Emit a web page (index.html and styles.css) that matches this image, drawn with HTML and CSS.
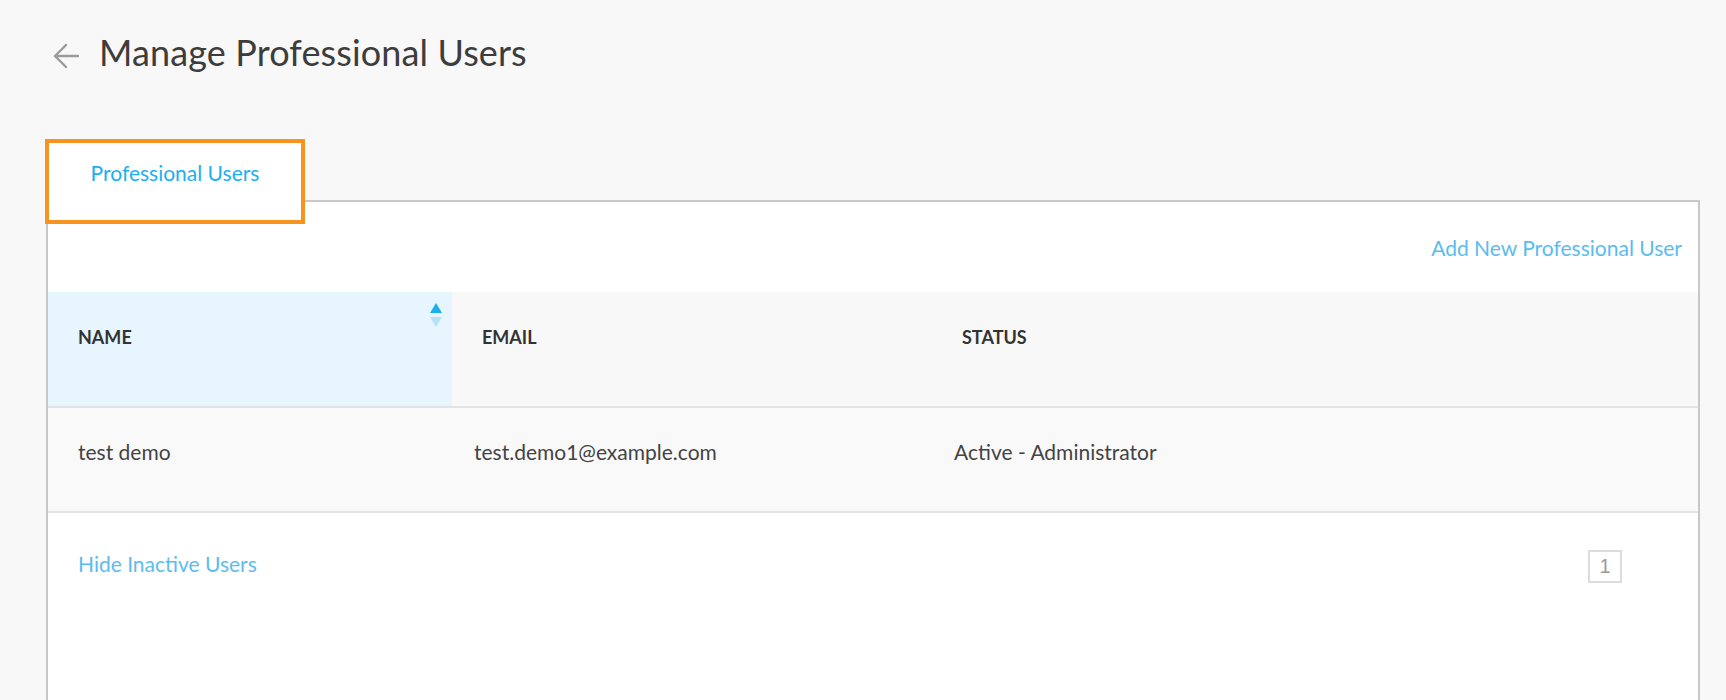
FILE: index.html
```html
<!DOCTYPE html>
<html lang="en">
<head>
    <meta charset="UTF-8">
    <meta name="viewport" content="width=device-width, initial-scale=1.0">
    <title>Manage Professional Users</title>
    <link rel="stylesheet" href="styles.css">
</head>
<body>
    <div class="page-head">
        <a class="back" href="#">
            <svg width="26" height="26" viewBox="0 0 26 26">
                <path d="M25 13H2M13 2L2 13L13 24" fill="none" stroke="#9a9a9a" stroke-width="2.4" stroke-linecap="round" stroke-linejoin="round"/>
            </svg>
        </a>
        <h1>Manage Professional Users</h1>
    </div>

    <div class="tabs">
        <div class="tab active">
            Professional Users
            <span class="highlight"></span>
        </div>
    </div>

    <div class="panel">
        <div class="toolbar">
            <a href="#" class="link">Add New Professional User</a>
        </div>

        <div class="table">
            <div class="thead">
                <div class="th sorted">
                    NAME
                    <svg class="sort" width="12" height="24" viewBox="0 0 12 24">
                        <path d="M6 0L12 10H0Z" fill="#1ab0f0"/>
                        <path d="M0 14H12L6 24Z" fill="#b4e2f9"/>
                    </svg>
                </div>
                <div class="th">EMAIL</div>
                <div class="th">STATUS</div>
            </div>
            <div class="tr">
                <div class="td first">test demo</div>
                <div class="td">test.demo1@example.com</div>
                <div class="td">Active - Administrator</div>
            </div>
        </div>

        <div class="table-foot">
            <a href="#" class="link">Hide Inactive Users</a>
            <div class="pager">
                <span class="page">1</span>
            </div>
        </div>
    </div>
</body>
</html>
```

FILE: styles.css
```css
body {
    margin: 0;
    padding: 0;
    background-color: #f8f8f8;
    font-family: 'Lato', 'Open Sans', sans-serif;
    color: #444;
}
a {
    text-decoration: none;
}
.page-head {
    display: flex;
    align-items: center;
    padding: 30px 0 0 53px;
    height: 44px;
}
.back {
    display: flex;
    margin-top: 7px;
    margin-right: 20px;
}
h1 {
    margin: 0;
    font-size: 36px;
    line-height: 44px;
    font-weight: 400;
    letter-spacing: 0.12px;
    color: #3d3d3d;
}
.tabs {
    display: flex;
    padding-left: 46px;
    margin-top: 66px;
    position: relative;
    z-index: 1;
}
.tab {
    position: relative;
    width: 254px;
    height: 57px;
    padding-top: 3px;
    line-height: 56px;
    text-align: center;
    background-color: #fff;
    border: 2px solid #c8c8c8;
    border-bottom: none;
    margin-bottom: -2px;
    font-size: 21px;
    color: #1ab0f0;
}
.tab .highlight {
    position: absolute;
    left: -3px;
    top: -3px;
    width: 260px;
    height: 85px;
    box-sizing: border-box;
    border: 4px solid #f7931e;
    pointer-events: none;
}
.panel {
    margin: 0 26px 0 46px;
    background-color: #fff;
    border: 2px solid #c8c8c8;
    border-bottom: none;
}
.toolbar {
    height: 90px;
    box-sizing: border-box;
    padding: 34px 16px 0;
    text-align: right;
    line-height: 24px;
}
.link {
    font-size: 21px;
    color: #5bbcf0;
}
.thead, .tr {
    display: grid;
    grid-template-columns: 404px 480px 1fr;
}
.thead {
    height: 114px;
    background-color: #f8f8f8;
    border-bottom: 2px solid #e3e3e3;
}
.th {
    position: relative;
    padding: 34px 0 0 30px;
    font-size: 18px;
    line-height: 22px;
    font-weight: 700;
    color: #333;
}
.th.sorted {
    background-color: #e7f5fe;
}
.sort {
    position: absolute;
    top: 11px;
    right: 10px;
}
.tr {
    height: 103px;
    background-color: #f9f9f9;
    border-bottom: 2px solid #e3e3e3;
}
.td {
    padding: 32px 0 0 22px;
    font-size: 21px;
    line-height: 24px;
    color: #444;
}
.td.first {
    padding-left: 30px;
}
.table-foot {
    display: flex;
    justify-content: space-between;
    align-items: flex-start;
    min-height: 220px;
    padding: 0 76px 0 30px;
}
.table-foot .link {
    margin-top: 39px;
    line-height: 24px;
}
.pager {
    margin-top: 37px;
}
.page {
    display: block;
    width: 30px;
    height: 29px;
    border: 2px solid #dcdcdc;
    text-align: center;
    line-height: 29px;
    font-family: 'Liberation Sans', Arial, sans-serif;
    font-size: 20px;
    color: #999;
}
```
